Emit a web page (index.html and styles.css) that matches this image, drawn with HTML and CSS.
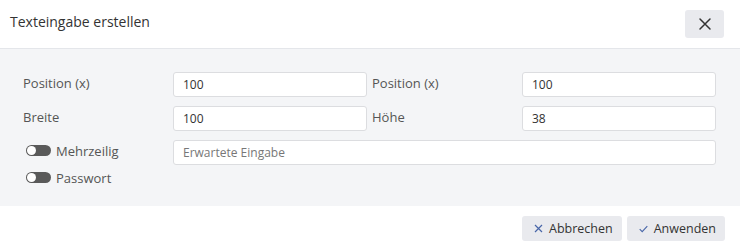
FILE: index.html
```html
<!DOCTYPE html>
<html lang="de">
<head>
    <meta charset="UTF-8">
    <meta name="viewport" content="width=device-width, initial-scale=1.0">
    <title>Texteingabe erstellen</title>
    <link rel="stylesheet" href="styles.css">
</head>
<body>
    <div class="dialog">
        <div class="dialog-header">
            <h1 class="dialog-title">Texteingabe erstellen</h1>
            <button class="btn-close" aria-label="Schließen">
                <svg width="14" height="14" viewBox="0 0 14 14"><path d="M2 2 L12 12 M12 2 L2 12" stroke="#333" stroke-width="1.5" stroke-linecap="round"/></svg>
            </button>
        </div>
        <div class="dialog-body">
            <div class="form-grid">
                <label class="form-label">Position (x)</label>
                <input class="form-input" type="text" value="100">
                <label class="form-label form-label-right">Position (x)</label>
                <input class="form-input" type="text" value="100">

                <label class="form-label">Breite</label>
                <input class="form-input" type="text" value="100">
                <label class="form-label form-label-right">Höhe</label>
                <input class="form-input" type="text" value="38">

                <div class="switches">
                    <label class="switch-row"><span class="switch"></span>Mehrzeilig</label>
                    <label class="switch-row"><span class="switch"></span>Passwort</label>
                </div>
                <input class="form-input form-input-wide" type="text" placeholder="Erwartete Eingabe">
            </div>
        </div>
        <div class="dialog-footer">
            <button class="btn">
                <svg width="9" height="9" viewBox="0 0 9 9"><path d="M1 1 L8 8 M8 1 L1 8" stroke="#4866a8" stroke-width="1.2"/></svg>
                Abbrechen
            </button>
            <button class="btn">
                <svg width="9" height="8" viewBox="0 0 9 8"><path d="M0.7 4.2 L3.2 6.7 L8.3 1.2" stroke="#4866a8" stroke-width="1.1" fill="none"/></svg>
                Anwenden
            </button>
        </div>
    </div>
</body>
</html>
```

FILE: styles.css
```css
* {
    margin: 0;
    padding: 0;
    box-sizing: border-box;
    font-family: 'Open Sans', 'Noto Sans', sans-serif;
}

body {
    background: #fff;
    color: #444;
    font-size: 12px;
}

.dialog {
    width: 740px;
    height: 251px;
    display: flex;
    flex-direction: column;
}

.dialog-header {
    height: 49px;
    display: flex;
    align-items: flex-start;
    justify-content: space-between;
    padding: 10px 16px 0 10px;
    border-bottom: 1px solid #e4e6ea;
}

.dialog-title {
    font-size: 14px;
    font-weight: 400;
    color: #333;
    line-height: 24px;
}

.btn-close {
    width: 39px;
    height: 28px;
    border: none;
    border-radius: 3px;
    background: #e9eaee;
    display: flex;
    align-items: center;
    justify-content: center;
    cursor: pointer;
}

.dialog-body {
    background: #f4f5f7;
    height: 157px;
    padding: 23px 24px 0 23px;
}

.form-grid {
    display: grid;
    grid-template-columns: 150px 194px 155px 194px;
    grid-auto-rows: 25px;
    row-gap: 9px;
    align-items: center;
}

.form-label {
    color: #555;
    font-size: 13px;
    line-height: 18px;
    padding-bottom: 3px;
}

.form-label-right {
    padding-left: 5px;
}

.form-input {
    height: 25px;
    border: 1px solid #dcdde0;
    border-radius: 3px;
    background: #fff;
    padding: 0 9px;
    font-size: 12px;
    color: #333;
    outline: none;
}

.form-input::placeholder {
    color: #777;
}

.form-input-wide {
    grid-column: 2 / 5;
}

.switches {
    grid-column: 1;
    align-self: start;
    margin-top: 2px;
    display: flex;
    flex-direction: column;
    gap: 10px;
}

.switch-row {
    display: flex;
    align-items: center;
    gap: 5px;
    height: 17px;
    color: #555;
    font-size: 13px;
    margin-left: 3px;
}

.switch {
    width: 25px;
    height: 11px;
    border-radius: 6px;
    background: #5a5a5a;
    position: relative;
    flex-shrink: 0;
}

.switch::after {
    content: '';
    position: absolute;
    left: 1px;
    top: 1px;
    width: 9px;
    height: 9px;
    border-radius: 50%;
    background: #fff;
}

.dialog-footer {
    flex: 1;
    display: flex;
    justify-content: flex-end;
    align-items: flex-start;
    gap: 5px;
    padding: 10px 15px 0 0;
}

.btn {
    height: 25px;
    padding: 0 9px 0 12px;
    border: none;
    border-radius: 3px;
    background: #e9eaee;
    color: #333;
    font-size: 12.5px;
    display: flex;
    align-items: center;
    gap: 6px;
    cursor: pointer;
}
```
